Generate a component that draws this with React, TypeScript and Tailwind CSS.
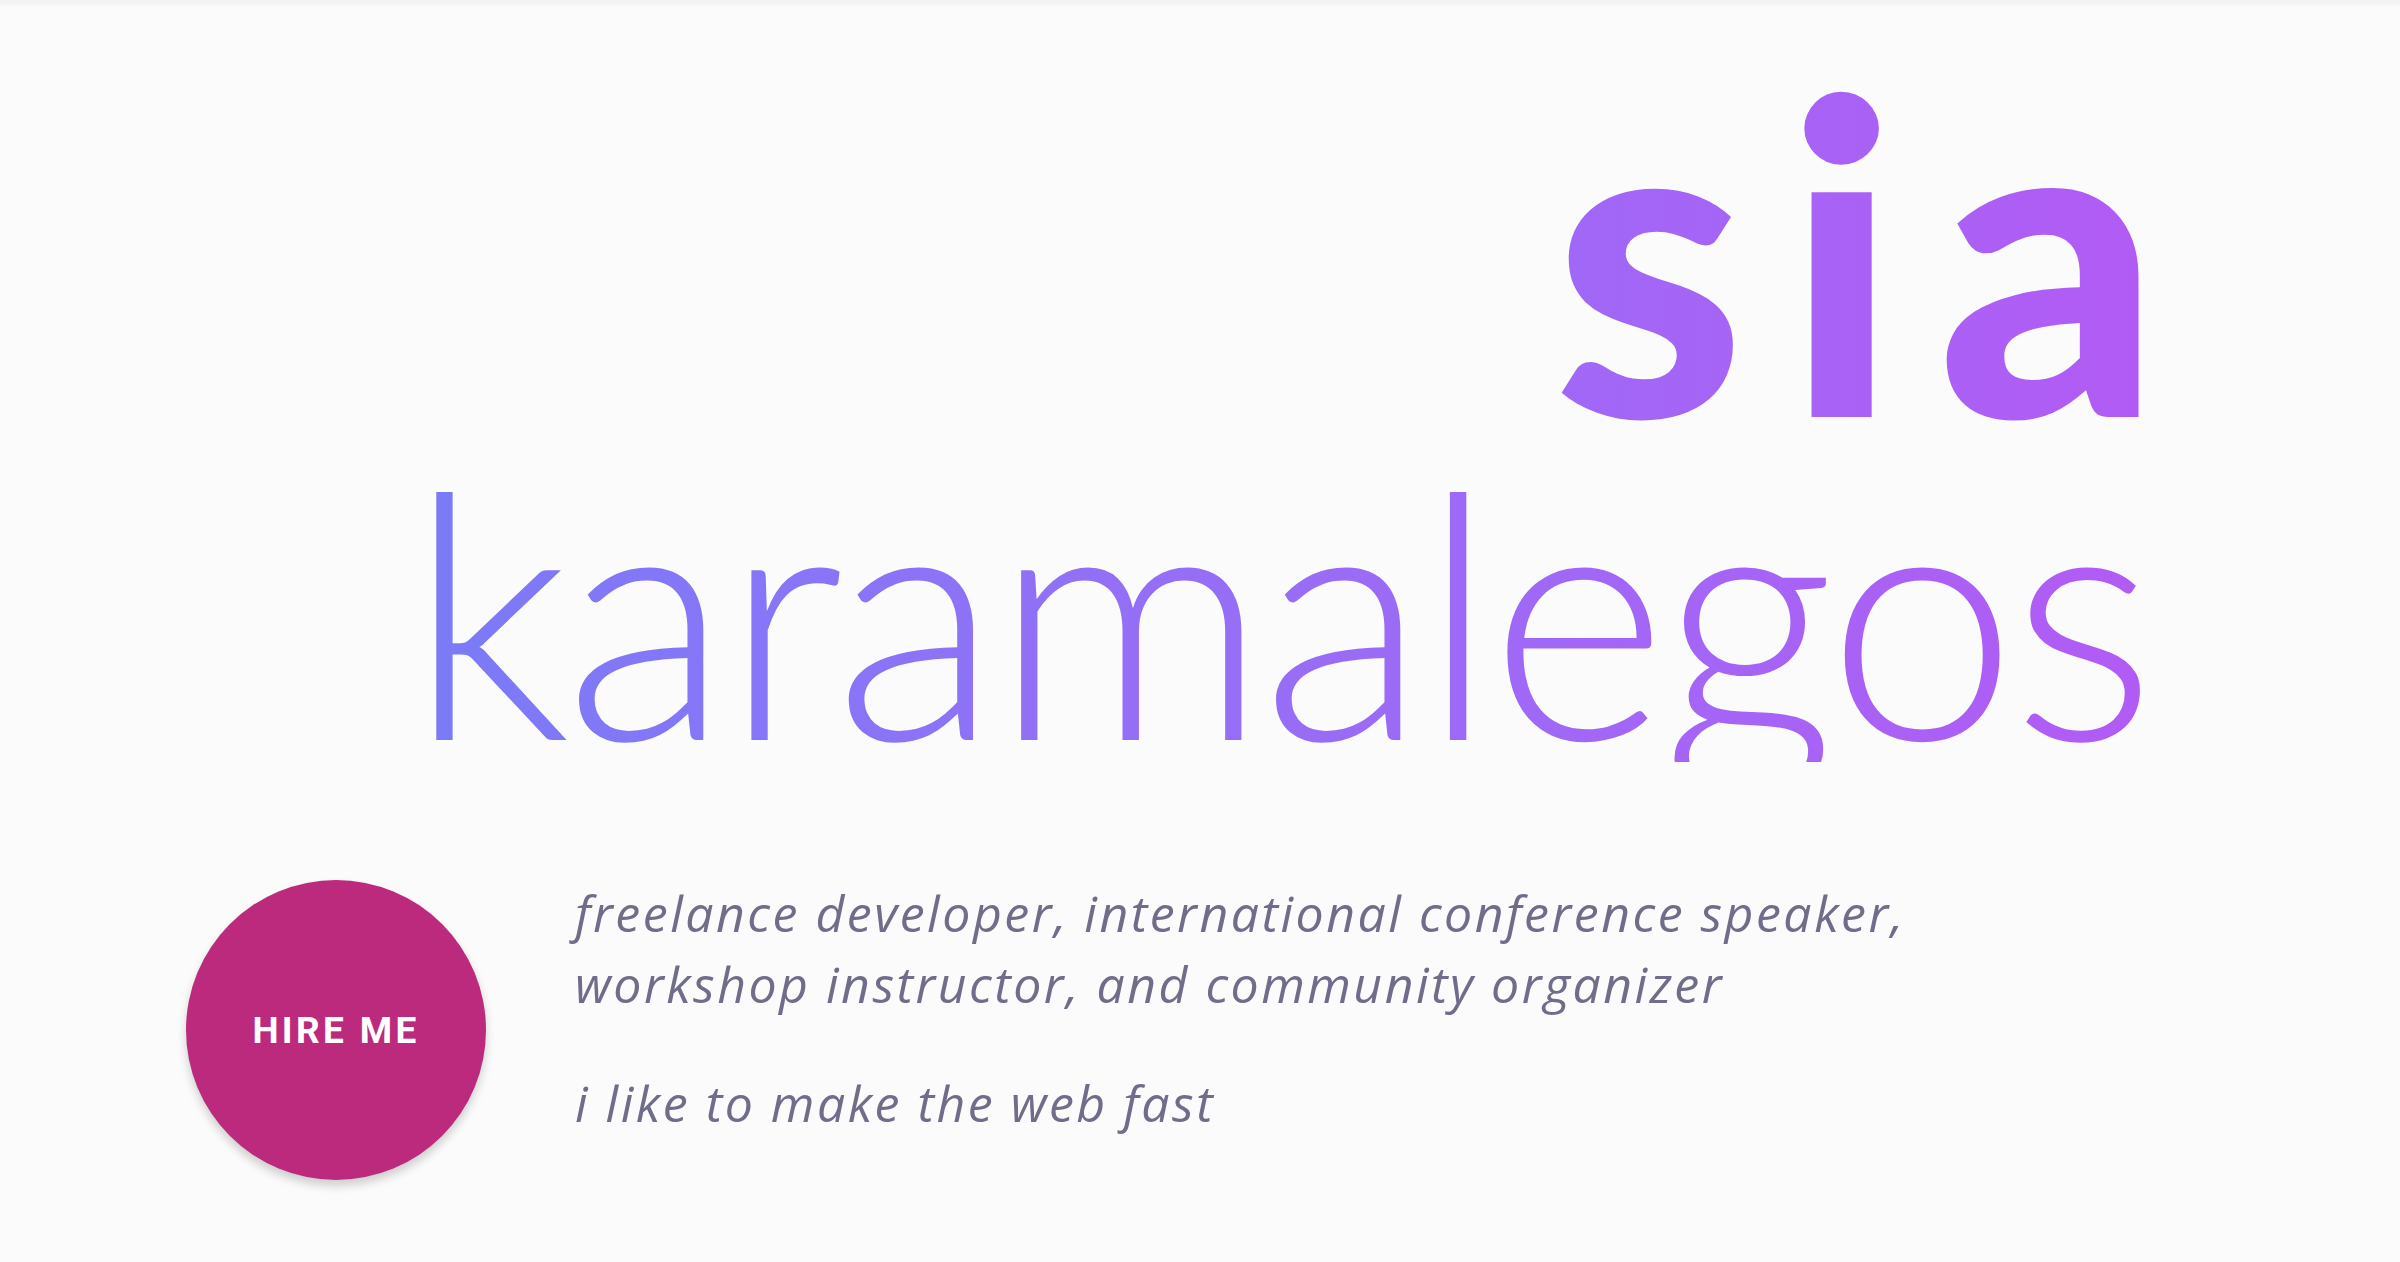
export default function App() {
  return (
    <div className="min-h-[1262px] w-full bg-[#fbfbfb]">
      <div className="h-[3px] w-full bg-[#f3f3f3] shadow-[0_1px_4px_rgba(0,0,0,0.06)]" />

      <header className="flex justify-end pr-[250px]">
        <h1 className="flex w-fit flex-col items-end bg-gradient-to-r from-[#7a7bf7] to-[#b15bf5] bg-clip-text pt-[50px] text-transparent">
          <span className="-mr-[50px] font-['Lato',sans-serif] text-[436px] leading-[0.9] font-black tracking-[0.09em]">
            sia
          </span>
          <span className="mt-[10px] font-['Lato',sans-serif] text-[341px] leading-[0.9] font-light tracking-[-0.018em]">
            karamalegos
          </span>
        </h1>
      </header>

      <section className="mt-[118px] flex items-start gap-[89px] pl-[186px]">
        <a
          href="#"
          className="flex h-[300px] w-[300px] shrink-0 items-center justify-center rounded-full bg-[#bc2a7d] shadow-[0_6px_10px_rgba(0,0,0,0.18)]"
        >
          <span className="font-['Roboto',sans-serif] text-[37px] font-bold tracking-[0.09em] text-white">
            HIRE ME
          </span>
        </a>

        <div className="-mt-[2px] flex flex-col gap-[48px] font-['Open_Sans',sans-serif] text-[50px] leading-[71px] tracking-[0.05em] text-[#6f6d8a] italic">
          <p>
            freelance developer, international conference speaker,
            <br />
            workshop instructor, and community organizer
          </p>
          <p>i like to make the web fast</p>
        </div>
      </section>
    </div>
  );
}
